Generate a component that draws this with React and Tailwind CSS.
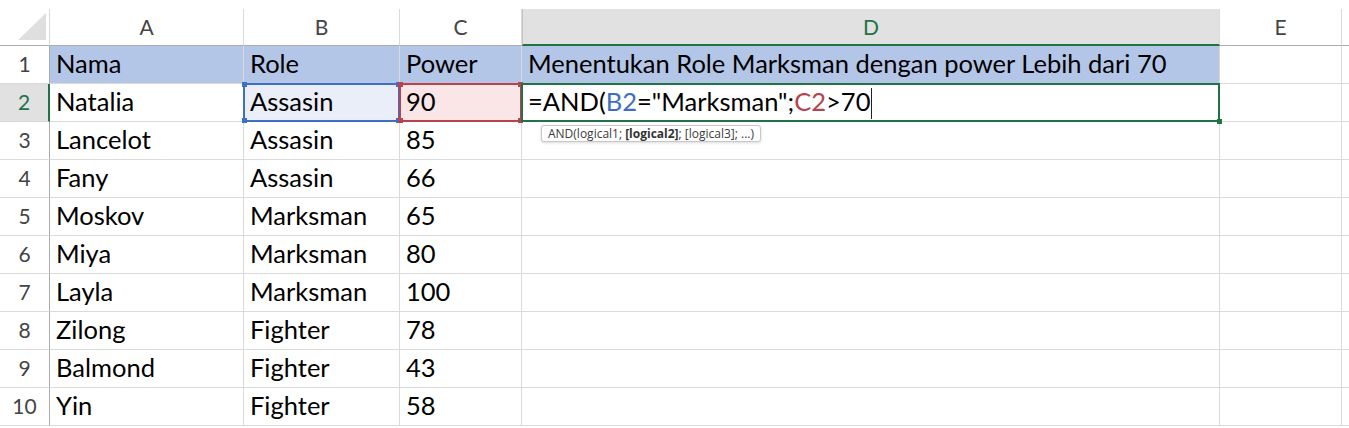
import React from "react";

const COLS = ["A", "B", "C", "D", "E", ""];
const ROWS = [
  ["Lancelot", "Assasin", "85"],
  ["Fany", "Assasin", "66"],
  ["Moskov", "Marksman", "65"],
  ["Miya", "Marksman", "80"],
  ["Layla", "Marksman", "100"],
  ["Zilong", "Fighter", "78"],
  ["Balmond", "Fighter", "43"],
  ["Yin", "Fighter", "58"],
];

const grid = "grid grid-cols-[50px_194px_156px_122px_698px_122px_1fr] grid-rows-[38px]";
const cell = "border-r border-b border-[#dadada] px-[6px] pb-[3px] flex items-center whitespace-nowrap";
const rowHead = "border-r border-b border-[#dadada] border-r-[#ababab] pb-[2px] flex items-center justify-center text-[21px] text-[#444]";

const Handle = ({ pos, color }) => (
  <span className={`absolute w-[5px] h-[5px] ${pos} ${color}`} />
);

const Corner = () => (
  <div className="border-r border-b border-[#dadada] border-b-[#ababab] relative">
    <svg width="50" height="36" className="absolute left-0 top-0">
      <polygon points="18,31 46,4 46,31" fill="#dfdfdf" />
    </svg>
  </div>
);

const App = () => {
  return (
    <div className="w-[1349px] h-[428px] overflow-hidden bg-white pt-[9px] font-['Lato',sans-serif] text-black">
      {/* column headers */}
      <div className="grid grid-cols-[50px_194px_156px_122px_698px_122px_1fr] h-[37px]">
        <Corner />
        {COLS.map((c, i) =>
          c === "D" ? (
            <div
              key={i}
              className="border-r border-l border-[#dadada] border-l-[#c4c4c4] border-b-2 border-b-[#217346] bg-[#e1e1e1] flex items-center justify-center text-[21px] text-[#217346]"
            >
              {c}
            </div>
          ) : (
            <div
              key={i}
              className={`${i < 5 ? "border-r" : ""} border-b border-[#dadada] border-b-[#ababab] flex items-center justify-center text-[21px] text-[#444]`}
            >
              {c}
            </div>
          )
        )}
      </div>

      {/* row 1 */}
      <div className={`${grid} h-[38px] text-[25.5px]`}>
        <div className={rowHead}>1</div>
        <div className={`${cell} bg-[#b4c6e7]`}>Nama</div>
        <div className={`${cell} bg-[#b4c6e7]`}>Role</div>
        <div className={`${cell} bg-[#b4c6e7]`}>Power</div>
        <div className={`${cell} bg-[#b4c6e7]`}>Menentukan Role Marksman dengan power Lebih dari 70</div>
        <div className={cell}></div>
        <div className="border-b border-[#dadada]"></div>
      </div>

      {/* row 2 - editing */}
      <div className={`${grid} h-[38px] text-[25.5px]`}>
        <div className="border-b border-[#dadada] border-r-2 border-r-[#217346] bg-[#e1e1e1] pb-[2px] flex items-center justify-center text-[21px] text-[#217346]">
          2
        </div>
        <div className={cell}>Natalia</div>
        <div className={`${cell} relative bg-[#e9eef8]`}>
          Assasin
          <div className="absolute -left-[1px] -top-[1px] -right-[1px] -bottom-[1px] border-2 border-[#3f6fc2] z-10">
            <Handle pos="-left-[3px] -top-[3px]" color="bg-[#3f6fc2]" />
            <Handle pos="-right-[3px] -top-[3px]" color="bg-[#3f6fc2]" />
            <Handle pos="-left-[3px] -bottom-[3px]" color="bg-[#3f6fc2]" />
            <Handle pos="-right-[3px] -bottom-[3px]" color="bg-[#3f6fc2]" />
          </div>
        </div>
        <div className={`${cell} relative bg-[#fbe6e7]`}>
          90
          <div className="absolute -left-[1px] -top-[1px] -right-[1px] -bottom-[1px] border-2 border-[#b8434e] z-10">
            <Handle pos="-left-[3px] -top-[3px]" color="bg-[#b8434e]" />
            <Handle pos="-right-[3px] -top-[3px]" color="bg-[#b8434e]" />
            <Handle pos="-left-[3px] -bottom-[3px]" color="bg-[#b8434e]" />
            <Handle pos="-right-[3px] -bottom-[3px]" color="bg-[#b8434e]" />
          </div>
        </div>
        <div className={`${cell} relative overflow-visible`}>
          <span>=AND(</span>
          <span className="text-[#3f6fc2]">B2</span>
          <span>="Marksman";</span>
          <span className="text-[#b8434e]">C2</span>
          <span>&gt;70</span>
          <span className="inline-block w-px h-[31px] bg-[#222] ml-[1px] translate-y-[2px]" />
          <div className="absolute -left-[1px] -top-[1px] -right-[1px] -bottom-[1px] border-2 border-[#217346] z-10">
            <Handle pos="-right-[4px] -bottom-[4px]" color="bg-[#217346]" />
          </div>
          <div className="absolute left-[19px] top-[41px] z-20 h-[17px] px-[6px] flex items-center bg-white border border-[#c8c8c8] rounded-[3px] shadow-[0_1px_3px_rgba(0,0,0,0.15)] text-[12px] text-[#3c3c3c] font-['Open_Sans',sans-serif]">
            AND(logical1; <b className="ml-[3px] text-[#333]">[logical2]</b>; [logical3]; ...)
          </div>
        </div>
        <div className={cell}></div>
        <div className="border-b border-[#dadada]"></div>
      </div>

      {ROWS.map((r, i) => (
        <div key={i} className={`${grid} h-[38px] text-[25.5px]`}>
          <div className={rowHead}>{i + 3}</div>
          <div className={cell}>{r[0]}</div>
          <div className={cell}>{r[1]}</div>
          <div className={cell}>{r[2]}</div>
          <div className={cell}></div>
          <div className={cell}></div>
          <div className="border-b border-[#dadada]"></div>
        </div>
      ))}
    </div>
  );
};

export default App;
